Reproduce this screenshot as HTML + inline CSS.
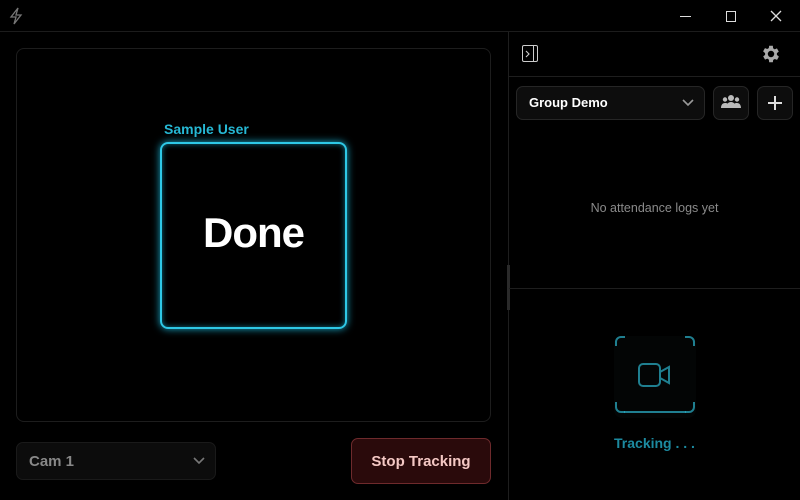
<!DOCTYPE html>
<html><head><style>
*{margin:0;padding:0;box-sizing:border-box}
body{width:800px;height:500px;background:#000;font-family:"Liberation Sans",sans-serif;position:relative;overflow:hidden;color:#fff}
.a{position:absolute}
</style></head><body>
<div class="a" style="left:0;top:31px;width:800px;height:1px;background:#1c1c1c"></div>
<svg class="a" style="left:8px;top:7px" width="16" height="18" viewBox="0 0 16 18"><path d="M10 1L3 10h5l-2 7 7-9H8z" fill="none" stroke="#777" stroke-width="1.3"/></svg>
<div class="a" style="left:680px;top:16px;width:11px;height:1px;background:#ddd"></div>
<div class="a" style="left:726px;top:11px;width:10px;height:11px;border:1.3px solid #ddd"></div>
<svg class="a" style="left:770px;top:10px" width="12" height="12"><path d="M1 1L11 11M11 1L1 11" stroke="#ddd" stroke-width="1.3"/></svg>

<div class="a" style="left:16px;top:48px;width:475px;height:374px;border:1px solid #1d1d1d;border-radius:8px"></div>
<div class="a" style="left:164px;top:121px;color:#26b8d4;font-weight:bold;font-size:14px">Sample User</div>
<div class="a" style="left:160px;top:142px;width:187px;height:187px;border:2px solid #2ec8e6;border-radius:8px;box-shadow:0 0 8px #1aa8c8,inset 0 0 6px #0e6d80"></div>
<div class="a" style="left:160px;top:209px;width:187px;text-align:center;font-size:42px;font-weight:bold;letter-spacing:-1px">Done</div>

<div class="a" style="left:16px;top:442px;width:200px;height:38px;background:#0c0c0c;border:1px solid #1a1a1a;border-radius:7px"></div>
<div class="a" style="left:29px;top:453px;color:#888;font-size:15px;font-weight:bold">Cam 1</div>
<svg class="a" style="left:193px;top:457px" width="12" height="8"><path d="M1 1l5 5 5-5" fill="none" stroke="#777" stroke-width="1.6"/></svg>
<div class="a" style="left:351px;top:438px;width:140px;height:46px;background:#2a0a0b;border:1px solid #6e2a2c;border-radius:7px;color:#f4c8c4;font-weight:bold;font-size:15px;text-align:center;line-height:46px">Stop Tracking</div>

<div class="a" style="left:508px;top:32px;width:1px;height:468px;background:#1e1e1e"></div>
<div class="a" style="left:507px;top:265px;width:3px;height:45px;background:#2a2a2a"></div>
<div class="a" style="left:509px;top:76px;width:291px;height:1px;background:#1e1e1e"></div>
<div class="a" style="left:522px;top:45px;width:16px;height:17px;border:1.3px solid #ccc;border-radius:2px"></div>
<div class="a" style="left:533px;top:45px;width:1.3px;height:17px;background:#ccc"></div>
<svg class="a" style="left:525px;top:50px" width="6" height="8"><path d="M1 1l3 3-3 3" fill="none" stroke="#ccc" stroke-width="1.1"/></svg>
<svg class="a" style="left:760px;top:43px" width="22" height="22" viewBox="0 0 24 24"><path fill="#aaa" fill-rule="evenodd" d="M19.4 13a7.5 7.5 0 0 0 0-2l2.1-1.6-2-3.5-2.5 1a7 7 0 0 0-1.7-1L15 3h-4l-.4 2.6a7 7 0 0 0-1.7 1l-2.5-1-2 3.5L6.6 11a7.5 7.5 0 0 0 0 2l-2.1 1.6 2 3.5 2.5-1a7 7 0 0 0 1.7 1L11 21h4l.4-2.6a7 7 0 0 0 1.7-1l2.5 1 2-3.5zM13 15.5a3.5 3.5 0 1 1 0-7 3.5 3.5 0 0 1 0 7z" transform="translate(-1 0)"/></svg>

<div class="a" style="left:516px;top:86px;width:189px;height:34px;background:#0d0d0d;border:1px solid #262626;border-radius:7px"></div>
<div class="a" style="left:529px;top:95px;font-size:13px;font-weight:bold">Group Demo</div>
<svg class="a" style="left:682px;top:99px" width="12" height="8"><path d="M1 1l5 5 5-5" fill="none" stroke="#999" stroke-width="1.6"/></svg>
<div class="a" style="left:713px;top:86px;width:36px;height:34px;background:#0d0d0d;border:1px solid #262626;border-radius:7px"></div>
<svg class="a" style="left:721px;top:94px" width="20" height="16" viewBox="0 0 20 16"><circle cx="10" cy="4" r="3" fill="#bbb"/><circle cx="4" cy="5.5" r="2.2" fill="#bbb"/><circle cx="16" cy="5.5" r="2.2" fill="#bbb"/><path d="M5 14c0-4 2.5-6 5-6s5 2 5 6z" fill="#bbb"/><path d="M0 14c0-3 1.5-5 4-5s3 1 3 2v3zM20 14c0-3-1.5-5-4-5s-3 1-3 2v3z" fill="#bbb"/></svg>
<div class="a" style="left:757px;top:86px;width:36px;height:34px;background:#0d0d0d;border:1px solid #262626;border-radius:7px"></div>
<svg class="a" style="left:767px;top:95px" width="16" height="16"><path d="M8 1v14M1 8h14" stroke="#ddd" stroke-width="2"/></svg>

<div class="a" style="left:509px;top:201px;width:291px;text-align:center;color:#8a8a8a;font-size:12.5px">No attendance logs yet</div>
<div class="a" style="left:509px;top:288px;width:291px;height:1px;background:#1e1e1e"></div>

<svg class="a" style="left:612px;top:334px" width="86" height="86" viewBox="0 0 86 86">
<rect x="2" y="2" width="82" height="82" rx="8" fill="#030505"/>
<g fill="none" stroke="#1f7f90" stroke-width="2">
<path d="M4 12V8a5 5 0 0 1 5-5h4M73 3h4a5 5 0 0 1 5 5v4M4 68v5a5 5 0 0 0 5 5h4M82 68v5a5 5 0 0 1-5 5h-4"/>
<rect x="27" y="30" width="21" height="22" rx="4"/><path d="M48 38l9-5v16l-9-5"/>
</g>
<path d="M12 78h62" stroke="#2aa8c0" stroke-width="1.5"/>
</svg>
<div class="a" style="left:509px;top:435px;width:291px;text-align:center;color:#1c8aa0;font-weight:bold;font-size:14px">Tracking . . .</div>
</body></html>
